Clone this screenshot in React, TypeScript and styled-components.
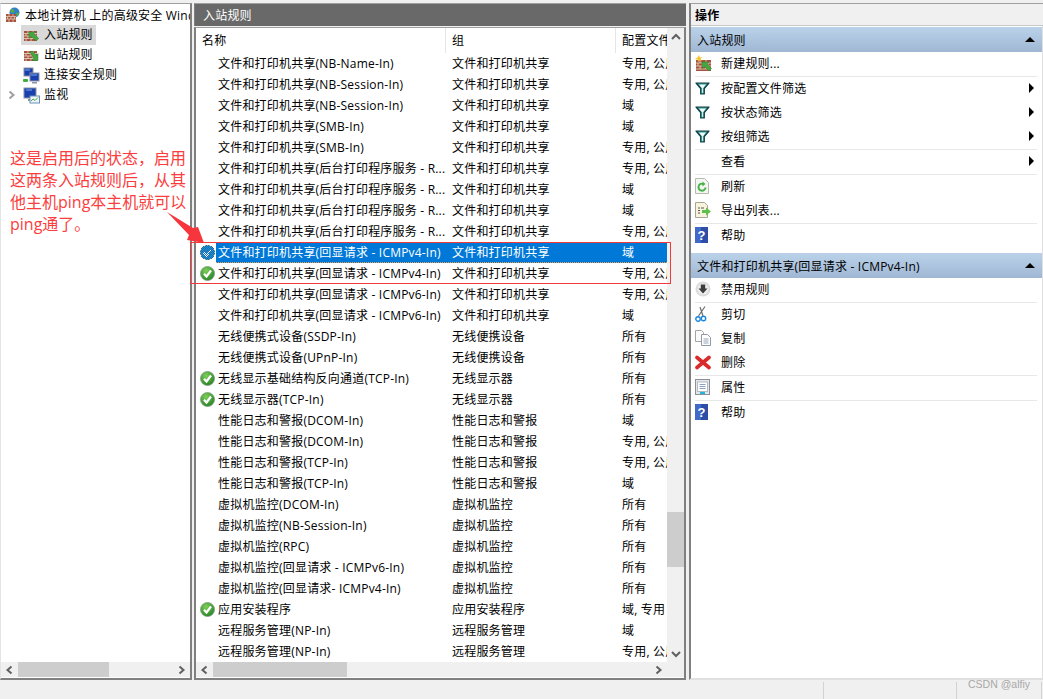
import styled, { createGlobalStyle } from 'styled-components';

const GlobalStyle = createGlobalStyle`
  html, body {
    margin: 0;
    padding: 0;
    background: #f0f0f0;
  }
  * {
    box-sizing: border-box;
  }
  svg {
    flex-shrink: 0;
  }
`;

type Status = 'none' | 'check' | 'shield';
type Rule = { name: string; group: string; profile: string; status?: Status; selected?: boolean };

const share = '文件和打印机共享';
const perf = '性能日志和警报';
const vm = '虚拟机监控';
const spool = '文件和打印机共享(后台打印程序服务 - R...';
const mixed = '专用, 公用';

const rules: Rule[] = [
  { name: '文件和打印机共享(NB-Name-In)', group: share, profile: mixed },
  { name: '文件和打印机共享(NB-Session-In)', group: share, profile: mixed },
  { name: '文件和打印机共享(NB-Session-In)', group: share, profile: '域' },
  { name: '文件和打印机共享(SMB-In)', group: share, profile: '域' },
  { name: '文件和打印机共享(SMB-In)', group: share, profile: mixed },
  { name: spool, group: share, profile: mixed },
  { name: spool, group: share, profile: '域' },
  { name: spool, group: share, profile: '域' },
  { name: spool, group: share, profile: mixed },
  { name: '文件和打印机共享(回显请求 - ICMPv4-In)', group: share, profile: '域', status: 'shield', selected: true },
  { name: '文件和打印机共享(回显请求 - ICMPv4-In)', group: share, profile: mixed, status: 'check' },
  { name: '文件和打印机共享(回显请求 - ICMPv6-In)', group: share, profile: mixed },
  { name: '文件和打印机共享(回显请求 - ICMPv6-In)', group: share, profile: '域' },
  { name: '无线便携式设备(SSDP-In)', group: '无线便携设备', profile: '所有' },
  { name: '无线便携式设备(UPnP-In)', group: '无线便携设备', profile: '所有' },
  { name: '无线显示基础结构反向通道(TCP-In)', group: '无线显示器', profile: '所有', status: 'check' },
  { name: '无线显示器(TCP-In)', group: '无线显示器', profile: '所有', status: 'check' },
  { name: '性能日志和警报(DCOM-In)', group: perf, profile: '域' },
  { name: '性能日志和警报(DCOM-In)', group: perf, profile: mixed },
  { name: '性能日志和警报(TCP-In)', group: perf, profile: mixed },
  { name: '性能日志和警报(TCP-In)', group: perf, profile: '域' },
  { name: '虚拟机监控(DCOM-In)', group: vm, profile: '所有' },
  { name: '虚拟机监控(NB-Session-In)', group: vm, profile: '所有' },
  { name: '虚拟机监控(RPC)', group: vm, profile: '所有' },
  { name: '虚拟机监控(回显请求 - ICMPv6-In)', group: vm, profile: '所有' },
  { name: '虚拟机监控(回显请求- ICMPv4-In)', group: vm, profile: '所有' },
  { name: '应用安装程序', group: '应用安装程序', profile: '域, 专用', status: 'check' },
  { name: '远程服务管理(NP-In)', group: '远程服务管理', profile: '域' },
  { name: '远程服务管理(NP-In)', group: '远程服务管理', profile: mixed },
];

const Bricks = () => (
  <>
    <rect x="1" y="4" width="13" height="10" fill="#a5533c" />
    <path d="M1 6.500h13M1 9h13M1 11.500h13M5 4v2.500M10 4v2.500M3 6.500V9M8 6.500V9M12 6.500V9M5 9v2.500M10 9v2.500M3 11.500V14M8 11.500V14" stroke="#e8d8c8" strokeWidth="0.8" fill="none" />
  </>
);

const WallIn = () => (
  <svg width="17" height="16" viewBox="0 0 17 16">
    <Bricks />
    <path d="M6 5l6.500 0-1.800 1.800 5 4.500-2.400 2.700-5-4.600L6 11.500z" fill="#43a83f" stroke="#2c7d30" strokeWidth="0.5" />
  </svg>
);

const WallOut = () => (
  <svg width="17" height="16" viewBox="0 0 17 16">
    <Bricks />
    <path d="M7 5l2.400-1 4 4.400L15 6.600V13.500H8.500l2.300-2.300z" fill="#43a83f" stroke="#2c7d30" strokeWidth="0.5" />
  </svg>
);

const WallNew = () => (
  <svg width="17" height="17" viewBox="0 0 17 17">
    <rect x="1" y="5" width="15" height="11" fill="#a5533c" />
    <path d="M1 8h15M1 11h15M1 14h15M5 5v3M11 5v3M3 8v3M8 8v3M13 8v3M5 11v3M11 11v3" stroke="#e8d8c8" strokeWidth="0.8" fill="none" />
    <path d="M7 7h7l-2 2 4.500 4.500-2.500 2.500L9.500 11.500 7.500 13.500z" fill="#43a83f" stroke="#2c7d30" strokeWidth="0.5" />
    <path d="M4 0l.9 2.600L7.500 2 5.500 4l1.500 2-2.500-.8L3 7l-.3-2.500L0 4l2.300-1.200z" fill="#f5c22c" />
  </svg>
);

const RootIcon = () => (
  <svg width="16" height="16" viewBox="0 0 16 16">
    <circle cx="9.500" cy="5.500" r="5" fill="#2f7fc9" />
    <path d="M6 2.500c2-1 3 0 3.500 1.500s-2 2-3 1.500-1.500-2-.5-3zM11 6c2-.5 3 0 3 1.500l-2 2z" fill="#58ad45" />
    <rect x="1" y="7" width="10" height="8" fill="#a5533c" />
    <path d="M1 9.500h10M1 12h10M4 7v2.500M8 7v2.500M2.500 9.500V12M6 9.500V12M9.500 9.500V12M4 12v3M8 12v3" stroke="#e8d8c8" strokeWidth="0.7" fill="none" />
  </svg>
);

const Computers = () => (
  <svg width="17" height="17" viewBox="0 0 17 17">
    <rect x="1" y="1" width="9" height="8" fill="#1a3fae" stroke="#8a94a5" />
    <rect x="7" y="6" width="9" height="8" fill="#1a3fae" stroke="#8a94a5" />
    <path d="M2 3l5 0M8 8h6" stroke="#7fb0ee" />
    <rect x="0" y="12" width="5" height="3" rx="1" fill="#3fae3c" />
    <path d="M9 15h5v1.500H9z" fill="#8a94a5" />
  </svg>
);

const Monitor = () => (
  <svg width="17" height="17" viewBox="0 0 17 17">
    <rect x="1" y="1" width="12" height="10" fill="#1a3fae" stroke="#8a94a5" />
    <path d="M3 3h6" stroke="#7fb0ee" />
    <path d="M5 12h4v2H5z" fill="#8a94a5" />
    <rect x="7" y="9" width="9.500" height="7" fill="#eef4fa" stroke="#6c8fb8" />
    <path d="M8 14l2-2 2 1.500 3-3" stroke="#3fae3c" fill="none" />
  </svg>
);

const Funnel = () => (
  <svg width="15" height="13" viewBox="0 0 15 13">
    <path d="M1 1h13L9.300 6.500V12H5.700V6.500z" fill="#3f9491" stroke="#0e3f43" strokeWidth="1.200" strokeLinejoin="round" />
    <path d="M4 2.500h7L8.300 6H6.700z" fill="#eafaf7" />
    <path d="M7.500 6v5" stroke="#cdeee9" strokeWidth="1.200" />
  </svg>
);

const Refresh = () => (
  <svg width="14" height="16" viewBox="0 0 14 16">
    <path d="M.5.5h9l4 4v11H.5z" fill="#f4f7f1" stroke="#b5b9ae" />
    <path d="M10.500 9.500A3.500 3.500 0 1 1 8.500 6" fill="none" stroke="#49b24a" strokeWidth="2" />
    <path d="M7.500 3.500l3 2.500-3 2.500z" fill="#49b24a" />
  </svg>
);

const ExportList = () => (
  <svg width="17" height="16" viewBox="0 0 17 16">
    <path d="M.5.5h9l3 3v12H.5z" fill="#f7f3dc" stroke="#a9a593" />
    <path d="M3 6h2M3 8.500h2M3 11h2M6 6h3" stroke="#55554a" />
    <path d="M7 8h4V5.500l5 4-5 4V11H7z" fill="#5ec04a" />
  </svg>
);

const Help = () => (
  <svg width="14" height="16" viewBox="0 0 14 16">
    <rect x="0" y="0" width="13" height="16" fill="#2c4ea8" />
    <rect x="0" y="0" width="6" height="16" fill="#4069c8" />
    <text x="6.500" y="13" textAnchor="middle" fontSize="13" fontWeight="700" fill="#fff" fontFamily="Liberation Sans, sans-serif">?</text>
  </svg>
);

const DisableRule = () => (
  <svg width="16" height="16" viewBox="0 0 16 16">
    <circle cx="8" cy="8" r="7.500" fill="#dcdcdc" />
    <circle cx="8" cy="8" r="5.500" fill="#eeeeee" />
    <path d="M5.800 3.500h4.400v4H12.500L8 12.500 3.500 7.500h2.300z" fill="#3c3c3c" />
  </svg>
);

const Scissors = () => (
  <svg width="13" height="16" viewBox="0 0 13 16">
    <path d="M3.500 10L10 .5M8 10L5 1" stroke="#6d6d6d" strokeWidth="1.200" fill="none" />
    <circle cx="3" cy="13" r="2.200" fill="none" stroke="#1c87e0" strokeWidth="1.400" />
    <circle cx="8.500" cy="12.500" r="2.200" fill="none" stroke="#1c87e0" strokeWidth="1.400" />
  </svg>
);

const Copy = () => (
  <svg width="16" height="16" viewBox="0 0 16 16">
    <path d="M.5.500h6l2 2v9h-8z" fill="#fbfbfb" stroke="#a4a4a4" />
    <path d="M6.500 4.500h6l3 3v8h-9z" fill="#fff" stroke="#8f9aa6" />
    <path d="M8.500 9h5M8.500 11h5M8.500 13h5" stroke="#94a4b8" />
  </svg>
);

const Delete = () => (
  <svg width="16" height="15" viewBox="0 0 16 15">
    <path d="M2 2.500L14 12.500M14 2.500L2 12.500" stroke="#d92b2b" strokeWidth="3.600" strokeLinecap="round" />
  </svg>
);

const Properties = () => (
  <svg width="15" height="16" viewBox="0 0 15 16">
    <rect x="0.500" y="0.500" width="14" height="15" fill="#e3e6ea" stroke="#8b8f96" />
    <rect x="2.500" y="3" width="10" height="9.500" fill="#fff" stroke="#b4b9c0" />
    <path d="M4.500 5.500h6M4.500 7.500h6M4.500 9.500h6" stroke="#8aa2bd" />
    <path d="M5 14h5" stroke="#22b5e0" strokeWidth="2" />
  </svg>
);

const Badge = ({ dithered }: { dithered?: boolean }) => (
  <svg width="15" height="15" viewBox="0 0 15 15" shapeRendering={dithered ? 'crispEdges' : undefined}>
    <defs>
      <radialGradient id="okGrad" cx="0.400" cy="0.300" r="0.800">
        <stop offset="0" stopColor="#7fcf5a" />
        <stop offset="1" stopColor="#1c7a1e" />
      </radialGradient>
      <pattern id="selDither" width="2" height="2" patternUnits="userSpaceOnUse">
        <rect x="0" y="0" width="1" height="1" fill="#0a6fd0" />
        <rect x="1" y="1" width="1" height="1" fill="#0a6fd0" />
      </pattern>
    </defs>
    <circle cx="7.500" cy="7.500" r="7" fill={dithered ? '#2f8fb0' : 'url(#okGrad)'} stroke="#7f9f7f" strokeWidth="0.800" />
    <path d="M4 7.800l2.500 2.700L11 4.500" fill="none" stroke="#fff" strokeWidth="2.200" />
    {dithered && <circle cx="7.500" cy="7.500" r="7.500" fill="url(#selDither)" />}
  </svg>
);

const Chevron = ({ dir }: { dir: 'left' | 'right' | 'up' | 'down' }) => {
  const d = {
    left: 'M6.500 1.500L2.500 5l4 3.500',
    right: 'M2.500 1.500L6.500 5l-4 3.500',
    up: 'M1 7l4-4 4 4',
    down: 'M1 3l4 4 4-4',
  }[dir];
  return (
    <svg width="10" height="10" viewBox="0 0 10 10">
      <path d={d} fill="none" stroke="#606060" strokeWidth="2" />
    </svg>
  );
};

type Action = { label: string; icon?: React.ReactNode; more?: boolean; sep?: boolean };

const actionsTop: Action[] = [
  { label: '新建规则...', icon: <WallNew />, sep: true },
  { label: '按配置文件筛选', icon: <Funnel />, more: true },
  { label: '按状态筛选', icon: <Funnel />, more: true },
  { label: '按组筛选', icon: <Funnel />, more: true, sep: true },
  { label: '查看', more: true, sep: true },
  { label: '刷新', icon: <Refresh /> },
  { label: '导出列表...', icon: <ExportList />, sep: true },
  { label: '帮助', icon: <Help /> },
];

const actionsRule: Action[] = [
  { label: '禁用规则', icon: <DisableRule />, sep: true },
  { label: '剪切', icon: <Scissors /> },
  { label: '复制', icon: <Copy /> },
  { label: '删除', icon: <Delete />, sep: true },
  { label: '属性', icon: <Properties />, sep: true },
  { label: '帮助', icon: <Help /> },
];

const ActionList = ({ items }: { items: Action[] }) => (
  <>
    {items.map((a, i) => (
      <ActionRow key={i} $sep={a.sep}>
        <ActionIcon>{a.icon}</ActionIcon>
        <ActionLabel>{a.label}</ActionLabel>
        {a.more && <MoreArrow />}
      </ActionRow>
    ))}
  </>
);

function App() {
  return (
    <Page>
      <GlobalStyle />
      <Main>
        <TreePanel>
          <TreeBody>
            <TreeRoot>
              <RootIcon />
              <span>本地计算机 上的高级安全 Windows Defender 防火墙</span>
            </TreeRoot>
            <TreeItem $selected>
              <WallIn />
              <TreeLabel>入站规则</TreeLabel>
            </TreeItem>
            <TreeItem>
              <WallOut />
              <TreeLabel>出站规则</TreeLabel>
            </TreeItem>
            <TreeItem>
              <Computers />
              <TreeLabel>连接安全规则</TreeLabel>
            </TreeItem>
            <TreeItem>
              <Expander>
                <Chevron dir="right" />
              </Expander>
              <Monitor />
              <TreeLabel>监视</TreeLabel>
            </TreeItem>
          </TreeBody>
          <HScroll>
            <ScrollArrow>
              <Chevron dir="left" />
            </ScrollArrow>
            <HTrack>
              <HThumb $width={91} />
            </HTrack>
            <ScrollArrow>
              <Chevron dir="right" />
            </ScrollArrow>
          </HScroll>
        </TreePanel>

        <RulesPanel>
          <DarkTitle>入站规则</DarkTitle>
          <ListFrame>
            <ListMain>
              <Table>
                <HeadRow>
                  <HeadName>名称</HeadName>
                  <HeadCell $width={170}>组</HeadCell>
                  <HeadCell $width={52}>配置文件</HeadCell>
                </HeadRow>
                {rules.map((r, i) => (
                  <RuleRow key={i}>
                    <BadgeCell>
                      {r.status === 'check' && <Badge />}
                      {r.status === 'shield' && <Badge dithered />}
                    </BadgeCell>
                    <RuleCells $selected={r.selected}>
                      <NameCell>{r.name}</NameCell>
                      <GroupCell>{r.group}</GroupCell>
                      <ProfileCell>{r.profile}</ProfileCell>
                    </RuleCells>
                  </RuleRow>
                ))}
              </Table>
              <VScroll>
                <ScrollArrowV>
                  <Chevron dir="up" />
                </ScrollArrowV>
                <VTrack>
                  <VThumb />
                </VTrack>
                <ScrollArrowV>
                  <Chevron dir="down" />
                </ScrollArrowV>
              </VScroll>
            </ListMain>
            <HScroll>
              <ScrollArrow>
                <Chevron dir="left" />
              </ScrollArrow>
              <HTrack>
                <HThumb $width={134} />
              </HTrack>
              <ScrollArrow>
                <Chevron dir="right" />
              </ScrollArrow>
              <ScrollCorner />
            </HScroll>
          </ListFrame>
        </RulesPanel>

        <ActionsPanel>
          <ActionsTitle>操作</ActionsTitle>
          <ActionsBody>
            <SectionHeader>
              <span>入站规则</span>
              <CollapseArrow />
            </SectionHeader>
            <ActionList items={actionsTop} />
            <SectionHeader $gap>
              <span>文件和打印机共享(回显请求 - ICMPv4-In)</span>
              <CollapseArrow />
            </SectionHeader>
            <ActionList items={actionsRule} />
          </ActionsBody>
        </ActionsPanel>
      </Main>

      <StatusBar>
        <StatusCell $width={823} />
        <StatusCell $width={133} $line />
        <StatusCell $width={85} $line />
        <StatusCell $width={2} $line />
      </StatusBar>

      <Note>
        这是启用后的状态，启用
        <br />
        这两条入站规则后，从其
        <br />
        他主机ping本主机就可以
        <br />
        ping通了。
      </Note>
      <NoteArrow width="42" height="36" viewBox="0 0 42 36">
        <path d="M2 2L28 18 33 17 39 33 22 30 24 25z" fill="#f6363c" />
      </NoteArrow>
      <Highlight />
      <Watermark>CSDN @alfiy</Watermark>
    </Page>
  );
}

export default App;

const uiFont = `"Open Sans", "Noto Sans CJK SC", sans-serif`;

const Page = styled.div`
  position: relative;
  width: 1043px;
  height: 699px;
  overflow: hidden;
  background: #f0f0f0;
  display: flex;
  flex-direction: column;
  font-family: ${uiFont};
  font-size: 12px;
  letter-spacing: 0.2px;
  color: #000;
`;

const Main = styled.div`
  flex: 0 0 680px;
  display: flex;
  padding-top: 3px;
`;

const TreePanel = styled.div`
  width: 192px;
  display: flex;
  flex-direction: column;
  background: #fff;
  border: 1px solid #a0a0a0;
  border-left-color: #e4e4e4;
  border-right: 2px solid #808080;
  border-bottom: 2px solid #808080;
`;

const TreeBody = styled.div`
  flex: 1;
  padding-top: 1px;
  overflow: hidden;
`;

const TreeRoot = styled.div`
  height: 20px;
  display: flex;
  align-items: center;
  gap: 4px;
  padding-left: 4px;
  white-space: nowrap;
  overflow: hidden;
`;

const TreeItem = styled.div<{ $selected?: boolean }>`
  position: relative;
  width: ${(p) => (p.$selected ? '75px' : 'auto')};
  height: 20px;
  margin-left: 20px;
  display: flex;
  align-items: center;
  gap: 4px;
  padding-left: 2px;
  background: ${(p) => (p.$selected ? '#d9d9d9' : 'transparent')};
`;

const TreeLabel = styled.span`
  padding-bottom: 2px;
`;

const Expander = styled.span`
  position: absolute;
  left: -14px;
  top: 5px;
  display: flex;
  opacity: 0.6;
`;

const HScroll = styled.div`
  flex: 0 0 15px;
  display: flex;
  background: #f0f0f0;
  margin-bottom: 1px;
`;

const ScrollArrow = styled.div`
  flex: 0 0 17px;
  display: flex;
  align-items: center;
  justify-content: center;
`;

const HTrack = styled.div`
  flex: 1;
  display: flex;
`;

const HThumb = styled.div<{ $width: number }>`
  width: ${(p) => p.$width}px;
  background: #cdcdcd;
`;

const ScrollCorner = styled.div`
  flex: 0 0 17px;
`;

const RulesPanel = styled.div`
  width: 492px;
  margin-left: 2px;
  display: flex;
  flex-direction: column;
`;

const DarkTitle = styled.div`
  flex: 0 0 23px;
  display: flex;
  align-items: center;
  padding-left: 8px;
  background: #696969;
  color: #fff;
  border-top: 1px solid #a0a0a0;
  border-left: 1px solid #808080;
`;

const ListFrame = styled.div`
  flex: 1;
  min-height: 0;
  margin-top: 1px;
  display: flex;
  flex-direction: column;
  background: #fff;
  border: 1px solid #a0a0a0;
  border-right: 2px solid #808080;
  border-bottom: 2px solid #808080;
  border-left: 2px solid #808080;
`;

const ListMain = styled.div`
  flex: 1;
  min-height: 0;
  display: flex;
`;

const Table = styled.div`
  width: 471px;
  overflow: hidden;
`;

const HeadRow = styled.div`
  height: 25px;
  display: flex;
`;

const HeadName = styled.div`
  width: 249px;
  padding: 3px 0 0 6px;
`;

const HeadCell = styled.div<{ $width: number }>`
  width: ${(p) => p.$width}px;
  height: 25px;
  padding: 3px 0 0 6px;
  border-left: 1px solid #e5e5e5;
  white-space: nowrap;
  overflow: hidden;
`;

const RuleRow = styled.div`
  height: 21px;
  display: flex;
`;

const BadgeCell = styled.div`
  flex: 0 0 20px;
  display: flex;
  align-items: center;
  justify-content: center;
  padding-left: 3px;
`;

const RuleCells = styled.div<{ $selected?: boolean }>`
  flex: 1;
  display: flex;
  align-items: center;
  white-space: nowrap;
  background: ${(p) => (p.$selected ? '#0078d7' : 'transparent')};
  color: ${(p) => (p.$selected ? '#fff' : '#000')};
  border-bottom: 1px dotted ${(p) => (p.$selected ? '#e8a04a' : 'transparent')};
`;

const NameCell = styled.div`
  width: 229px;
  padding-left: 2px;
  overflow: hidden;
`;

const GroupCell = styled.div`
  width: 170px;
  padding-left: 7px;
  overflow: hidden;
`;

const ProfileCell = styled.div`
  width: 52px;
  padding-left: 7px;
  overflow: hidden;
`;

const VScroll = styled.div`
  flex: 1;
  display: flex;
  flex-direction: column;
  background: #f0f0f0;
`;

const ScrollArrowV = styled.div`
  flex: 0 0 17px;
  display: flex;
  align-items: center;
  justify-content: center;
`;

const VTrack = styled.div`
  flex: 1;
  padding-top: 467px;
`;

const VThumb = styled.div`
  height: 55px;
  background: #cdcdcd;
`;

const ActionsPanel = styled.div`
  flex: 1;
  margin-left: 3px;
  display: flex;
  flex-direction: column;
  border-left: 2px solid #808080;
  border-top: 1px solid #a0a0a0;
  border-bottom: 2px solid #e0e0e0;
  background: #fff;
`;

const ActionsTitle = styled.div`
  flex: 0 0 22px;
  display: flex;
  align-items: center;
  padding-left: 4px;
  background: #f0f0f0;
  border-bottom: 1px solid #c8c8c8;
  font-weight: 600;
`;

const ActionsBody = styled.div`
  flex: 1;
  padding-top: 1px;
  border-right: 1px solid #e0e0e0;
`;

const SectionHeader = styled.div<{ $gap?: boolean }>`
  height: 25px;
  margin-top: ${(p) => (p.$gap ? '5px' : '0')};
  display: flex;
  align-items: center;
  justify-content: space-between;
  padding: 0 7px 0 6px;
  background: linear-gradient(#bad2e9, #9fb7d3);
`;

const CollapseArrow = styled.span`
  width: 0;
  height: 0;
  border-left: 5px solid transparent;
  border-right: 5px solid transparent;
  border-bottom: 5px solid #000;
`;

const ActionRow = styled.div<{ $sep?: boolean }>`
  position: relative;
  height: ${(p) => (p.$sep ? '25px' : '24px')};
  display: flex;
  align-items: center;
  padding: ${(p) => (p.$sep ? '0 8px 3px 4px' : '0 8px 2px 4px')};
  &::after {
    content: '';
    display: ${(p) => (p.$sep ? 'block' : 'none')};
    position: absolute;
    left: 4px;
    right: 5px;
    bottom: 0;
    height: 1px;
    background: #e8e8e8;
  }
`;

const ActionIcon = styled.span`
  flex: 0 0 26px;
  display: flex;
  align-items: center;
`;

const ActionLabel = styled.span`
  flex: 1;
`;

const MoreArrow = styled.span`
  width: 0;
  height: 0;
  border-top: 5px solid transparent;
  border-bottom: 5px solid transparent;
  border-left: 5px solid #000;
`;

const StatusBar = styled.div`
  flex: 1;
  display: flex;
  padding-top: 2px;
`;

const StatusCell = styled.div<{ $width: number; $line?: boolean }>`
  width: ${(p) => p.$width}px;
  border-left: ${(p) => (p.$line ? '1px solid #d2d2d2' : 'none')};
`;

const Note = styled.div`
  position: absolute;
  left: 10px;
  top: 147px;
  font-family: "Open Sans", "Noto Sans CJK SC", sans-serif;
  font-size: 16px;
  line-height: 22px;
  letter-spacing: 0;
  color: #fb3d3d;
  white-space: nowrap;
`;

const NoteArrow = styled.svg`
  position: absolute;
  left: 165px;
  top: 210px;
`;

const Highlight = styled.div`
  position: absolute;
  left: 190px;
  top: 242px;
  width: 481px;
  height: 42px;
  border: 1px solid #f23a3a;
`;

const Watermark = styled.div`
  position: absolute;
  left: 968px;
  top: 678px;
  font-family: "Liberation Sans", sans-serif;
  font-size: 10.5px;
  letter-spacing: 0;
  color: #a8a8a8;
`;
